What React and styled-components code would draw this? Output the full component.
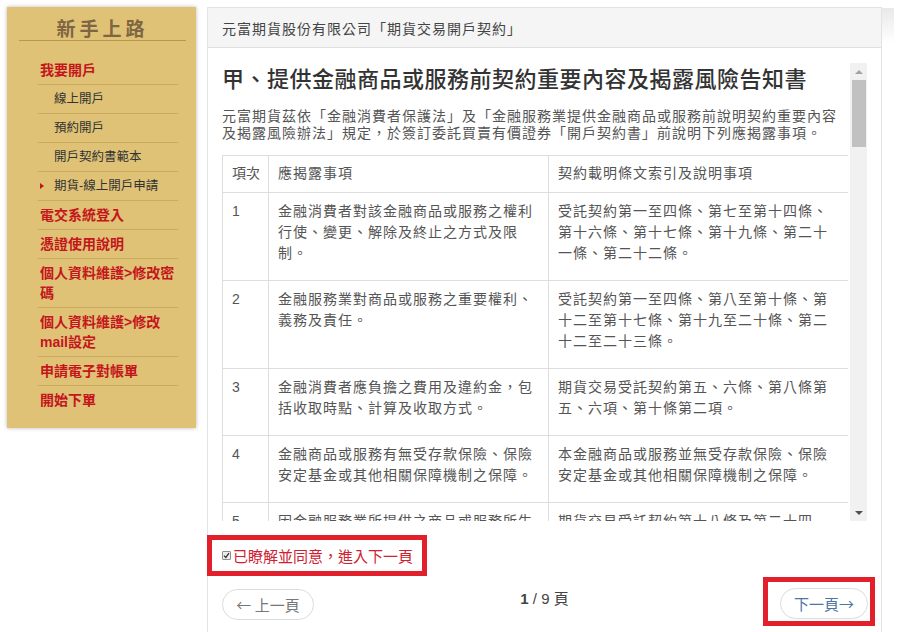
import React from "react";
import styled, { createGlobalStyle, css } from "styled-components";

const GlobalStyle = createGlobalStyle`
  html, body { margin: 0; padding: 0; background: #fff; }
  body {
    font-family: "Liberation Sans", "Noto Sans CJK TC", sans-serif;
    color: #333;
  }
  * { box-sizing: border-box; }
`;

const Page = styled.div`
  display: flex;
  align-items: flex-start;
  gap: 11px;
  padding: 7px 0 0 7px;
  height: 632px;
  overflow: hidden;
`;

const Sidebar = styled.aside`
  width: 189px;
  flex-shrink: 0;
  background: #dfc276;
  box-shadow: 0 0 4px rgba(0, 0, 0, 0.28);
  padding: 9px 10px 14px 12px;
`;

const SideTitle = styled.h2`
  margin: 0;
  font-family: "Noto Sans CJK TC", serif;
  font-size: 19px;
  font-weight: 700;
  letter-spacing: 4px;
  line-height: 24px;
  color: #7f6643;
  text-align: center;
  border-bottom: 1px solid #b8974f;
`;

const Menu = styled.ul`
  list-style: none;
  margin: 15px 8px 0 19px;
  padding: 0;
`;

const MenuItem = styled.li`
  position: relative;
  line-height: 20px;
  padding: 4px 0 4px 2px;
  border-bottom: 1px solid #c9aa5e;
  &:last-child { border-bottom: none; }
  ${(p) =>
    p.$variant === "main"
      ? css`
          font-size: 14px;
          font-weight: 700;
          color: #c4161c;
        `
      : css`
          font-size: 12.5px;
          color: #333;
          padding-left: 16px;
        `}
`;

const Caret = styled.span`
  position: absolute;
  left: 2px;
  top: 11px;
  width: 0;
  height: 0;
  border-top: 3.5px solid transparent;
  border-bottom: 3.5px solid transparent;
  border-left: 4px solid #c4161c;
`;

const Panel = styled.section`
  position: relative;
  width: 675px;
  height: 625px;
  flex-shrink: 0;
  border: 1px solid #e3e3e3;
  border-bottom: none;
  &::after {
    content: "";
    position: absolute;
    right: -13px;
    top: 0;
    width: 12px;
    height: 36px;
    background: linear-gradient(to bottom, #e9e9e9, rgba(255, 255, 255, 0));
  }
`;

const PanelHeader = styled.header`
  height: 40px;
  display: flex;
  align-items: center;
  padding: 0 14px;
  background: #f5f5f5;
  border-bottom: 1px solid #dedede;
  font-family: "Noto Sans CJK TC", sans-serif;
  font-size: 14px;
  letter-spacing: 1px;
  color: #444;
`;

const PanelBody = styled.div`
  padding: 15px 14px 0 14px;
`;

const ScrollArea = styled.div`
  display: flex;
  height: 458px;
`;

const ScrollContent = styled.div`
  flex: 1;
  min-width: 0;
  overflow: hidden;
`;

const DocTitle = styled.h1`
  margin: 0;
  font-family: "Noto Sans CJK TC", sans-serif;
  font-size: 22px;
  font-weight: 500;
  letter-spacing: 0.5px;
  line-height: 28px;
  color: #333;
`;

const Intro = styled.p`
  margin: 16px 0 0;
  font-family: "Noto Sans CJK TC", sans-serif;
  font-size: 14px;
  letter-spacing: 1px;
  line-height: 17px;
  color: #555;
`;

const Table = styled.table`
  margin-top: 14px;
  width: 100%;
  border-collapse: collapse;
  table-layout: fixed;
  font-family: "Liberation Sans", "Noto Sans CJK TC", sans-serif;
  font-size: 14px;
  letter-spacing: 1px;
  color: #555;
`;

const Th = styled.th`
  border: 1px solid #dddddd;
  padding: 7px 9px 8px;
  line-height: 21px;
  font-weight: normal;
  text-align: left;
  vertical-align: top;
  white-space: nowrap;
  letter-spacing: ${(p) => (p.$tight ? "0" : "1px")};
`;

const Td = styled.td`
  border: 1px solid #dddddd;
  padding: 8px 9px 16px;
  line-height: 21px;
  vertical-align: top;
`;

const Scrollbar = styled.div`
  width: 17px;
  margin-left: 2px;
  flex-shrink: 0;
  background: #f1f1f1;
  display: flex;
  flex-direction: column;
  align-items: center;
`;

const ArrowBtn = styled.div`
  height: 17px;
  width: 17px;
  display: flex;
  align-items: center;
  justify-content: center;
  &::before {
    content: "";
    width: 0;
    height: 0;
    border-left: 4px solid transparent;
    border-right: 4px solid transparent;
    ${(p) =>
      p.$dir === "up"
        ? css`border-bottom: 4px solid #a3a3a3;`
        : css`border-top: 4px solid #505050;`}
  }
`;

const Thumb = styled.div`
  width: 14px;
  height: 67px;
  background: #c1c1c1;
`;

const Spacer = styled.div`
  flex: 1;
`;

const Agreement = styled.label`
  display: inline-flex;
  align-items: center;
  gap: 2px;
  margin: 14px 0 0 -15px;
  height: 41px;
  padding: 0 9px 0 10px;
  border: 5px solid #e2202c;
  font-family: "Noto Sans CJK TC", sans-serif;
  font-size: 15px;
  line-height: 20px;
  color: #cf2030;
`;

const CheckBox = styled.span`
  width: 9px;
  height: 9px;
  border: 1px solid #8f8f8f;
  border-radius: 1px;
  background: #ececec;
  display: flex;
  align-items: center;
  justify-content: center;
  flex-shrink: 0;
`;

const Pager = styled.nav`
  display: grid;
  grid-template-columns: 1fr auto 1fr;
  align-items: start;
  margin-top: 13px;
`;

const PillButton = styled.button`
  height: 31px;
  padding: 0;
  border: 1px solid #dcdcdc;
  border-radius: 16px;
  background: #fff;
  font-family: "Noto Sans CJK TC", sans-serif;
  font-size: 15px;
  line-height: 1;
  cursor: pointer;
  width: ${(p) => p.$w}px;
  color: ${(p) => (p.$next ? "#4f76a3" : "#777")};
  justify-self: start;
`;

const PageInfo = styled.div`
  line-height: 20px;
  font-family: "Liberation Sans", "Noto Sans CJK TC", sans-serif;
  font-size: 15px;
  color: #444;
  b { font-weight: 700; }
`;

const Highlight = styled.div`
  justify-self: end;
  margin: -12px -8px 0 0;
  padding: 6px 2px 2px 12px;
  border: 5px solid #e2202c;
`;

const rows = [
  {
    n: "1",
    a: "金融消費者對該金融商品或服務之權利行使、變更、解除及終止之方式及限制。",
    b: "受託契約第一至四條、第七至第十四條、第十六條、第十七條、第十九條、第二十一條、第二十二條。",
  },
  {
    n: "2",
    a: "金融服務業對商品或服務之重要權利、義務及責任。",
    b: "受託契約第一至四條、第八至第十條、第十二至第十七條、第十九至二十條、第二十二至二十三條。",
  },
  {
    n: "3",
    a: "金融消費者應負擔之費用及違約金，包括收取時點、計算及收取方式。",
    b: "期貨交易受託契約第五、六條、第八條第五、六項、第十條第二項。",
  },
  {
    n: "4",
    a: "金融商品或服務有無受存款保險、保險安定基金或其他相關保障機制之保障。",
    b: "本金融商品或服務並無受存款保險、保險安定基金或其他相關保障機制之保障。",
  },
  {
    n: "5",
    a: "因金融服務業所提供之商品或服務所生紛爭之處理及申訴之管道。",
    b: "期貨交易受託契約第十八條及第二十四條。",
  },
];

const menu = [
  { t: "我要開戶", v: "main" },
  { t: "線上開戶", v: "sub" },
  { t: "預約開戶", v: "sub" },
  { t: "開戶契約書範本", v: "sub" },
  { t: "期貨-線上開戶申請", v: "sub", current: true },
  { t: "電交系統登入", v: "main" },
  { t: "憑證使用說明", v: "main" },
  { t: "個人資料維護>修改密碼", v: "main" },
  { t: "個人資料維護>修改mail設定", v: "main" },
  { t: "申請電子對帳單", v: "main" },
  { t: "開始下單", v: "main" },
];

export default function App() {
  return (
    <>
      <GlobalStyle />
      <Page>
        <Sidebar>
          <SideTitle>新手上路</SideTitle>
          <Menu>
            {menu.map((m) => (
              <MenuItem key={m.t} $variant={m.v}>
                {m.current && <Caret />}
                {m.t}
              </MenuItem>
            ))}
          </Menu>
        </Sidebar>
        <Panel>
          <PanelHeader>元富期貨股份有限公司「期貨交易開戶契約」</PanelHeader>
          <PanelBody>
            <ScrollArea>
              <ScrollContent>
                <DocTitle>甲、提供金融商品或服務前契約重要內容及揭露風險告知書</DocTitle>
                <Intro>
                  元富期貨茲依「金融消費者保護法」及「金融服務業提供金融商品或服務前說明契約重要內容及揭露風險辦法」規定，於簽訂委託買賣有價證券「開戶契約書」前說明下列應揭露事項。
                </Intro>
                <Table>
                  <colgroup>
                    <col style={{ width: 46 }} />
                    <col style={{ width: 280 }} />
                    <col style={{ width: 300 }} />
                  </colgroup>
                  <thead>
                    <tr>
                      <Th $tight>項次</Th>
                      <Th>應揭露事項</Th>
                      <Th>契約載明條文索引及說明事項</Th>
                    </tr>
                  </thead>
                  <tbody>
                    {rows.map((r) => (
                      <tr key={r.n}>
                        <Td>{r.n}</Td>
                        <Td>{r.a}</Td>
                        <Td>{r.b}</Td>
                      </tr>
                    ))}
                  </tbody>
                </Table>
              </ScrollContent>
              <Scrollbar>
                <ArrowBtn $dir="up" />
                <Thumb />
                <Spacer />
                <ArrowBtn $dir="down" />
              </Scrollbar>
            </ScrollArea>
            <Agreement>
              <CheckBox>
                <svg width="7" height="7" viewBox="0 0 7 7">
                  <path d="M1 3.6 L2.8 5.4 L6 1.2" fill="none" stroke="#333" strokeWidth="1.3" />
                </svg>
              </CheckBox>
              已瞭解並同意，進入下一頁
            </Agreement>
            <Pager>
              <PillButton $w={92}>← 上一頁</PillButton>
              <PageInfo>
                <b>1</b> / 9 頁
              </PageInfo>
              <Highlight>
                <PillButton $w={88} $next>下一頁→</PillButton>
              </Highlight>
            </Pager>
          </PanelBody>
        </Panel>
      </Page>
    </>
  );
}
